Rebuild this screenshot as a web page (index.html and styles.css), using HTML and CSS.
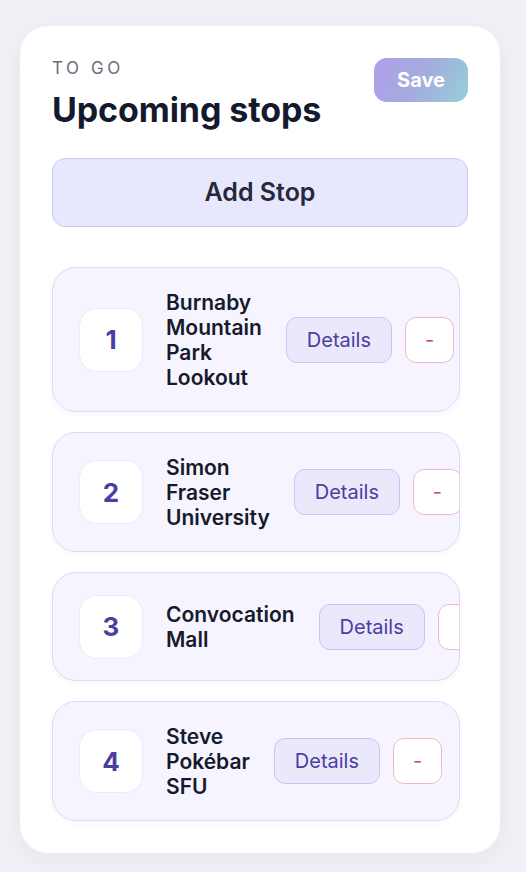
FILE: index.html
```html
<!DOCTYPE html>
<html lang="en">
<head>
<meta charset="utf-8">
<title>Upcoming stops</title>
<link rel="stylesheet" href="styles.css">
</head>
<body>
  <main class="card">
    <header class="head">
      <div class="titles">
        <div class="eyebrow">TO GO</div>
        <h1 class="title">Upcoming stops</h1>
      </div>
      <button class="save">Save</button>
    </header>
    <button class="add">Add Stop</button>
    <ul class="stops">
      <li class="stop">
        <div class="num">1</div>
        <div class="name">Burnaby Mountain Park Lookout</div>
        <div class="actions"><button class="details">Details</button><button class="remove">-</button></div>
      </li>
      <li class="stop">
        <div class="num">2</div>
        <div class="name">Simon Fraser University</div>
        <div class="actions"><button class="details">Details</button><button class="remove">-</button></div>
      </li>
      <li class="stop">
        <div class="num">3</div>
        <div class="name">Convocation Mall</div>
        <div class="actions"><button class="details">Details</button><button class="remove">-</button></div>
      </li>
      <li class="stop">
        <div class="num">4</div>
        <div class="name">Steve Pokébar SFU</div>
        <div class="actions"><button class="details">Details</button><button class="remove">-</button></div>
      </li>
    </ul>
  </main>
</body>
</html>
```

FILE: styles.css
```css
* { box-sizing: border-box; }
html, body { margin: 0; }
body {
  background: #f1f0f6;
  padding: 26px 26px 20px 20px;
  font-family: Inter, "Noto Sans", sans-serif;
  color: #151a2d;
}
button { font-family: inherit; cursor: pointer; }
.card {
  width: 480px;
  background: #ffffff;
  border-radius: 28px;
  padding: 32px 32px 32px 32px;
  box-shadow: 0 6px 24px rgba(40, 36, 80, 0.05);
}
.head {
  display: flex;
  justify-content: space-between;
  align-items: flex-start;
}
.eyebrow {
  font-size: 17px;
  line-height: 20px;
  letter-spacing: 3.6px;
  color: #6c6b7e;
  margin-bottom: 12px;
}
.title {
  margin: 0;
  font-size: 34px;
  line-height: 40px;
  font-weight: 700;
  letter-spacing: -0.1px;
  color: #141a2e;
}
.save {
  width: 94px;
  height: 44px;
  border: none;
  border-radius: 13px;
  background: linear-gradient(120deg, #b09ee9 0%, #a3acdf 50%, #96d0d7 100%);
  color: #ffffff;
  font-size: 20px;
  font-weight: 700;
}
.add {
  display: block;
  width: 100%;
  margin-top: 28px;
  padding: 19px 0;
  background: #e7e8fd;
  border: 1px solid #cfc8f5;
  border-radius: 13px;
  font-size: 25px;
  line-height: 29px;
  font-weight: 600;
  color: #272838;
}
.stops {
  list-style: none;
  margin: 40px 0 0 0;
  padding: 0;
  width: 408px;
  display: flex;
  flex-direction: column;
  gap: 20px;
}
.stop {
  display: flex;
  align-items: center;
  gap: 23px;
  padding: 21.5px 26px;
  background: #f6f5ff;
  border: 1px solid #ddd9f8;
  border-radius: 24px;
  overflow: hidden;
  box-shadow: 0 2px 6px rgba(60, 50, 140, 0.04);
}
.num {
  flex: 0 0 64px;
  height: 64px;
  display: flex;
  align-items: center;
  justify-content: center;
  background: #ffffff;
  border: 1.5px solid #ede9fc;
  border-radius: 18px;
  font-size: 26px;
  font-weight: 700;
  color: #4a3f9f;
}
.name {
  font-size: 21px;
  line-height: 25px;
  font-weight: 600;
  color: #161a2c;
  width: min-content;
  flex-shrink: 0;
}
.actions {
  display: flex;
  gap: 13px;
  flex-shrink: 0;
  margin-left: 1px;
}
.details {
  padding: 10px 20px;
  font-size: 20px;
  line-height: 24px;
  background: #ece8fc;
  border: 1px solid #cbc3f3;
  border-radius: 11px;
  color: #4940a0;
}
.remove {
  width: 49px;
  padding: 10px 0;
  font-size: 20px;
  line-height: 24px;
  background: #ffffff;
  border: 1px solid #f1b9c6;
  border-radius: 11px;
  color: #d9486a;
}
```
